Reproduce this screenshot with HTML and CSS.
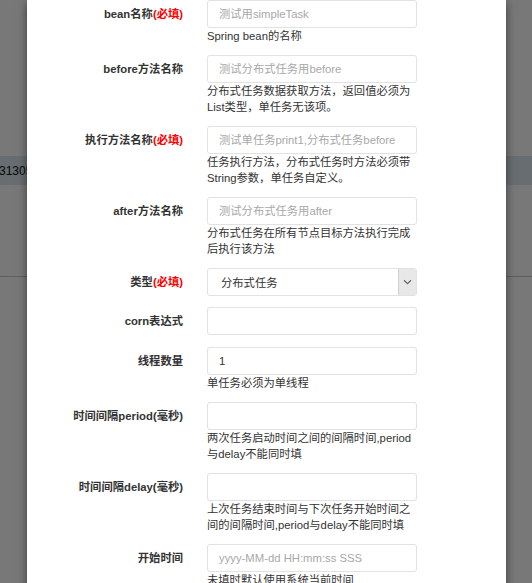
FILE: index.html
```html
<!DOCTYPE html>
<html>
<head>
<meta charset="utf-8">
<link rel="stylesheet" href="styles.css">
</head>
<body>
<div class="page">
  <div class="band"><span class="band-text">31305</span></div>
  <div class="rule"></div>
</div>
<div class="backdrop"></div>
<div class="modal">
  <form class="form">
    <div class="row">
      <label class="label">bean名称<span class="req">(必填)</span></label>
      <div class="field">
        <input class="input" placeholder="测试用simpleTask">
        <div class="help">Spring bean的名称</div>
      </div>
    </div>
    <div class="row">
      <label class="label">before方法名称</label>
      <div class="field">
        <input class="input" placeholder="测试分布式任务用before">
        <div class="help">分布式任务数据获取方法，返回值必须为List类型，单任务无该项。</div>
      </div>
    </div>
    <div class="row">
      <label class="label">执行方法名称<span class="req">(必填)</span></label>
      <div class="field">
        <input class="input" placeholder="测试单任务print1,分布式任务before">
        <div class="help">任务执行方法，分布式任务时方法必须带String参数，单任务自定义。</div>
      </div>
    </div>
    <div class="row">
      <label class="label">after方法名称</label>
      <div class="field">
        <input class="input" placeholder="测试分布式任务用after">
        <div class="help">分布式任务在所有节点目标方法执行完成后执行该方法</div>
      </div>
    </div>
    <div class="row">
      <label class="label">类型<span class="req">(必填)</span></label>
      <div class="field">
        <div class="select"><span class="select-text">分布式任务</span><span class="select-btn"><svg width="9" height="6" viewBox="0 0 9 6"><path d="M1 1.2 L4.5 4.6 L8 1.2" fill="none" stroke="#666" stroke-width="1.2"/></svg></span></div>
      </div>
    </div>
    <div class="row row-wide">
      <label class="label">corn表达式</label>
      <div class="field">
        <input class="input">
      </div>
    </div>
    <div class="row">
      <label class="label">线程数量</label>
      <div class="field">
        <input class="input value" value="1">
        <div class="help">单任务必须为单线程</div>
      </div>
    </div>
    <div class="row">
      <label class="label">时间间隔period(毫秒)</label>
      <div class="field">
        <input class="input">
        <div class="help">两次任务启动时间之间的间隔时间,period与delay不能同时填</div>
      </div>
    </div>
    <div class="row">
      <label class="label">时间间隔delay(毫秒)</label>
      <div class="field">
        <input class="input">
        <div class="help">上次任务结束时间与下次任务开始时间之间的间隔时间,period与delay不能同时填</div>
      </div>
    </div>
    <div class="row">
      <label class="label">开始时间</label>
      <div class="field">
        <input class="input" placeholder="yyyy-MM-dd HH:mm:ss SSS">
        <div class="help">未填时默认使用系统当前时间</div>
      </div>
    </div>
  </form>
</div>
</body>
</html>
```
FILE: styles.css
```css
html, body {
  margin: 0;
  padding: 0;
}
body {
  width: 532px;
  height: 583px;
  overflow: hidden;
  position: relative;
  background: #ffffff;
  font-family: "Liberation Sans", Arial, "Noto Sans CJK SC", sans-serif;
}
.page {
  padding-top: 156px;
}
.band {
  height: 29px;
  background: #dbe8f1;
  display: flex;
  align-items: center;
}
.band-text {
  font-size: 12px;
  color: #111;
  margin-left: -1px;
}
.rule {
  margin-top: 91px;
  border-top: 1px solid #c8c8c8;
}
.backdrop {
  position: absolute;
  left: 0;
  top: 0;
  right: 0;
  bottom: 0;
  background: rgba(0, 0, 0, 0.53);
}
.modal {
  position: absolute;
  left: 27px;
  top: 0;
  width: 479px;
  height: 620px;
  background: #fff;
  box-shadow: 0 3px 9px rgba(0, 0, 0, 0.5);
}
.form {
  margin: 0;
}
.row {
  display: flex;
  margin-bottom: 11px;
}
.row-wide {
  margin-bottom: 12px;
}
.label {
  width: 156px;
  flex: none;
  box-sizing: border-box;
  text-align: right;
  font-weight: bold;
  font-size: 11.3px;
  line-height: 16px;
  padding-top: 6px;
  color: #333;
}
.req {
  color: #f00;
}
.field {
  margin-left: 24px;
  width: 210px;
  flex: none;
}
.input {
  display: block;
  box-sizing: border-box;
  width: 210px;
  height: 28px;
  margin: 0;
  padding: 0 11px;
  border: 1px solid #e2e2e2;
  border-radius: 3px;
  font-family: inherit;
  font-size: 11.3px;
  color: #333;
  background: #fff;
  outline: none;
}
.input::placeholder {
  color: #a8a8a8;
}
.help {
  font-size: 11.3px;
  line-height: 16px;
  color: #333;
}
.select {
  box-sizing: border-box;
  height: 28px;
  border: 1px solid #e2e2e2;
  border-radius: 3px;
  display: flex;
  align-items: center;
  justify-content: space-between;
  overflow: hidden;
}
.select-text {
  font-size: 11.3px;
  color: #333;
  padding-left: 13px;
}
.select-btn {
  width: 17px;
  height: 100%;
  background: #e8e8e8;
  border-left: 1px solid #d0d0d0;
  display: flex;
  align-items: center;
  justify-content: center;
}
```
